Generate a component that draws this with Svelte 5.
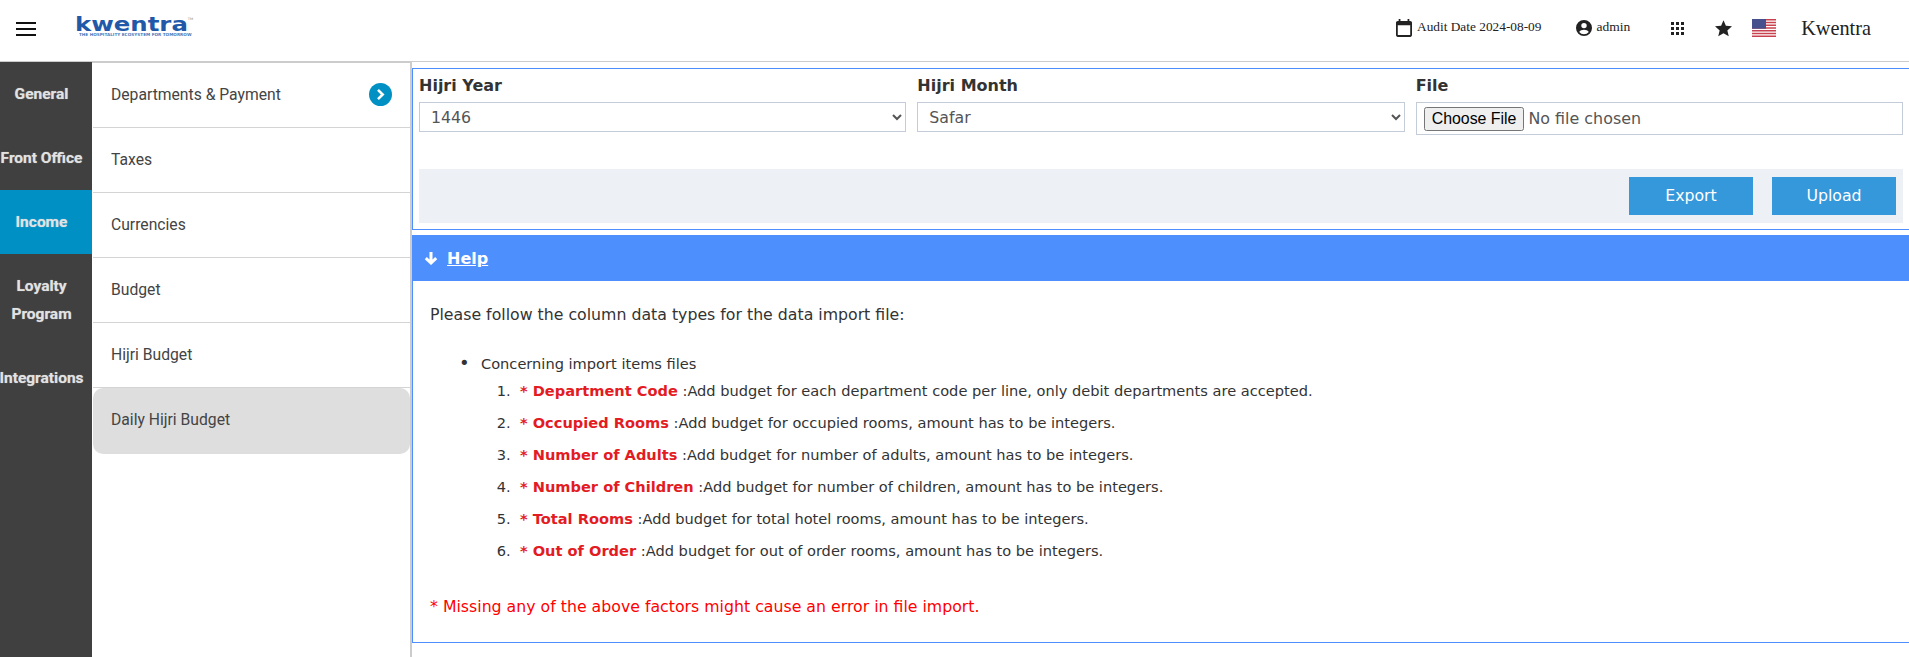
<script>
	const rail = [
		{ label: 'General', h: 63 },
		{ label: 'Front Office', h: 65 },
		{ label: 'Income', h: 64, active: true },
		{ label: 'Loyalty Program', h: 92 },
		{ label: 'Integrations', h: 64 }
	];

	const menu = ['Departments & Payment', 'Taxes', 'Currencies', 'Budget', 'Hijri Budget', 'Daily Hijri Budget'];

	const rules = [
		{ name: 'Department Code', text: 'Add budget for each department code per line, only debit departments are accepted.' },
		{ name: 'Occupied Rooms', text: 'Add budget for occupied rooms, amount has to be integers.' },
		{ name: 'Number of Adults', text: 'Add budget for number of adults, amount has to be integers.' },
		{ name: 'Number of Children', text: 'Add budget for number of children, amount has to be integers.' },
		{ name: 'Total Rooms', text: 'Add budget for total hotel rooms, amount has to be integers.' },
		{ name: 'Out of Order', text: 'Add budget for out of order rooms, amount has to be integers.' }
	];
</script>

<div class="page">
	<header class="topbar">
		<svg class="burger" width="20" height="14" viewBox="0 0 20 14"><path d="M0 0h20v2H0zM0 6h20v2H0zM0 12h20v2H0z" fill="#111" /></svg>
		<div class="logo">
			<span class="logo-word">kwentra<sup>TM</sup></span>
			<span class="logo-tag">THE HOSPITALITY ECOSYSTEM FOR TOMORROW</span>
		</div>
		<div class="top-right">
			<svg class="cal" width="16" height="18" viewBox="3 2 18 20"><path d="M19 4h-1V2h-2v2H8V2H6v2H5c-1.100 0-2 .9-2 2v14c0 1.100.9 2 2 2h14c1.100 0 2-.9 2-2V6c0-1.100-.9-2-2-2zm0 16H5V9h14v11z" fill="#222" /></svg>
			<span class="audit">Audit Date 2024-08-09</span>
			<svg class="user" width="16" height="16" viewBox="2 2 20 20"><path d="M12 2a10 10 0 1 0 0 20 10 10 0 0 0 0-20zm0 3.600a3.400 3.400 0 1 1 0 6.800 3.400 3.400 0 0 1 0-6.800zm0 14.200a7.800 7.800 0 0 1-6-2.800c.9-1.700 3.800-2.700 6-2.700s5.100 1 6 2.700a7.800 7.800 0 0 1-6 2.800z" fill="#222" /></svg>
			<span class="admin">admin</span>
			<svg class="apps" width="13" height="13" viewBox="0 0 13 13"><path d="M0 0h3v3H0zM5 0h3v3H5zM10 0h3v3h-3zM0 5h3v3H0zM5 5h3v3H5zM10 5h3v3h-3zM0 10h3v3H0zM5 10h3v3H5zM10 10h3v3h-3z" fill="#222" /></svg>
			<svg class="star" width="17" height="17" viewBox="2 2 20 19.500"><path d="M12 17.270 18.180 21l-1.640-7.030L22 9.240l-7.190-.61L12 2 9.190 8.630 2 9.240l5.460 4.730L5.820 21z" fill="#222" /></svg>
			<svg class="flag" width="24" height="18" viewBox="0 0 24 18">
				<rect width="24" height="18" fill="#fff" />
				<path d="M0 0h24v1.400H0zM0 2.800h24v1.400H0zM0 5.500h24v1.400H0zM0 8.300h24v1.400H0zM0 11.100h24v1.400H0zM0 13.800h24v1.400H0zM0 16.600h24V18H0z" fill="#c8414f" />
				<rect width="14" height="9.700" fill="#46508c" />
			</svg>
			<span class="brand">Kwentra</span>
		</div>
	</header>

	<div class="body">
		<nav class="rail">
			{#each rail as item}
				<div class="rail-item" class:active={item.active} style="height: {item.h}px">{item.label}</div>
			{/each}
		</nav>

		<aside class="menu">
			{#each menu as item, i}
				<div class="menu-item" class:current={i === 5}>
					<span>{item}</span>
					{#if i === 0}
						<svg width="23" height="23" viewBox="0 0 23 23"><circle cx="11.500" cy="11.500" r="11.500" fill="#0090c3" /><path d="M9 6.800l4.700 4.700L9 16.200" fill="none" stroke="#fff" stroke-width="2.600" /></svg>
					{/if}
				</div>
			{/each}
		</aside>

		<main class="content">
			<section class="filters">
				<div class="fields">
					<div class="field">
						<label for="year">Hijri Year</label>
						<select id="year"><option>1446</option></select>
					</div>
					<div class="field">
						<label for="month">Hijri Month</label>
						<select id="month"><option>Safar</option></select>
					</div>
					<div class="field">
						<label for="file">File</label>
						<div class="file-box"><input id="file" type="file" /></div>
					</div>
				</div>
				<div class="actions">
					<button>Export</button>
					<button>Upload</button>
				</div>
			</section>

			<section class="help">
				<div class="help-head">
					<svg width="14" height="13" viewBox="0 0 14 13"><path d="M7 0v11M1.800 6.200L7 11l5.200-4.800" fill="none" stroke="#fff" stroke-width="3" /></svg>
					<span>Help</span>
				</div>
				<div class="help-body">
					<p class="intro">Please follow the column data types for the data import file:</p>
					<ul>
						<li>
							Concerning import items files
							<ol>
								{#each rules as rule}
									<li><b>* {rule.name}</b> :{rule.text}</li>
								{/each}
							</ol>
						</li>
					</ul>
					<p class="warn">* Missing any of the above factors might cause an error in file import.</p>
				</div>
			</section>
		</main>
	</div>
</div>

<style>
	:global(body) {
		background: #fff;
		overflow: hidden;
	}

	.page {
		height: 657px;
		display: flex;
		flex-direction: column;
		font-family: 'DejaVu Sans', sans-serif;
		color: #333;
	}

	.topbar {
		height: 61px;
		border-bottom: 1px solid #ccc;
		display: flex;
		align-items: center;
	}

	.burger {
		margin-left: 16px;
		margin-top: -4px;
	}

	.logo {
		margin-left: 39px;
		margin-top: -8px;
		display: flex;
		flex-direction: column;
		width: 118px;
		color: #2159a8;
	}

	.logo-word {
		font-weight: 700;
		font-size: 20px;
		line-height: 16px;
		transform: scaleX(1.22);
		transform-origin: left center;
	}

	.logo-word sup {
		font-size: 3px;
		font-weight: 400;
		color: #888;
		vertical-align: 11px;
		line-height: 0;
	}

	.logo-tag {
		font-size: 4.200px;
		line-height: 5px;
		margin-left: 4px;
		font-weight: 700;
		white-space: nowrap;
		opacity: 0.8;
	}

	.top-right {
		margin-left: auto;
		display: flex;
		align-items: center;
		font-family: 'Liberation Serif', serif;
		color: #222;
		margin-top: -5px;
	}

	.audit {
		font-size: 13.330px;
		margin-left: 5px;
		margin-top: -3px;
	}

	.user {
		margin-left: 35px;
	}

	.admin {
		font-size: 13.500px;
		margin-left: 4px;
		margin-top: -3px;
	}

	.apps {
		margin-left: 41px;
	}

	.star {
		margin-left: 31px;
	}

	.flag {
		margin-left: 20px;
	}

	.brand {
		font-size: 20.300px;
		margin-left: 25px;
		margin-right: 38px;
	}

	.body {
		flex: 1;
		display: flex;
		min-height: 0;
	}

	.rail {
		width: 92px;
		flex: none;
		background: #404040;
		font-family: Roboto, sans-serif;
	}

	.rail-item {
		display: flex;
		align-items: center;
		justify-content: center;
		text-align: center;
		box-sizing: border-box;
		width: 92px;
		padding-right: 9px;
		color: #e2e2e2;
		font-size: 15.500px;
		font-weight: 700;
		line-height: 28px;
		text-shadow: 0 0 1px rgba(255, 255, 255, 0.5);
	}

	.rail-item.active {
		background: #0090c3;
	}

	.menu {
		width: 318px;
		flex: none;
		border-right: 2px solid #ccc;
		border-top: 1px solid #ccc;
		font-family: Roboto, sans-serif;
		font-size: 15.700px;
		color: #444;
	}

	.menu-item {
		height: 65px;
		box-sizing: border-box;
		border-bottom: 1px solid #d4d4d4;
		display: flex;
		align-items: center;
		justify-content: space-between;
		padding: 0 18px 2px 18px;
		margin-left: 1px;
	}

	.menu-item.current {
		height: 66px;
		background: #dedede;
		border-radius: 10px;
		border: none;
		padding-bottom: 4px;
	}

	.content {
		flex: 1;
		min-width: 0;
		padding-top: 6px;
	}

	.filters {
		height: 162px;
		box-sizing: border-box;
		border: 1px solid #4e8ffe;
		border-right: none;
		padding: 0 6px;
		display: flex;
		flex-direction: column;
	}

	.fields {
		display: grid;
		grid-template-columns: repeat(3, 1fr);
		column-gap: 11px;
		height: 100px;
	}

	.field {
		display: flex;
		flex-direction: column;
		align-items: stretch;
		min-width: 0;
	}

	label {
		font-weight: 700;
		font-size: 16px;
		line-height: 18px;
		margin-top: 8px;
		margin-bottom: 7px;
		color: #333;
	}

	select {
		height: 30px;
		box-sizing: border-box;
		border: 1px solid #c3ccd8;
		background: #fff;
		padding: 1px 0 0 7px;
		font-family: 'DejaVu Sans', sans-serif;
		font-size: 15.750px;
		color: #555;
		border-radius: 0;
	}

	.file-box {
		height: 33px;
		box-sizing: border-box;
		border: 1px solid #c3ccd8;
		padding: 4px 7px;
	}

	input[type='file'] {
		font-family: 'DejaVu Sans', sans-serif;
		font-size: 15.900px;
		color: #555;
	}

	.actions {
		height: 54px;
		background: #edf1f5;
		display: flex;
		justify-content: flex-end;
		align-items: center;
		gap: 19px;
		padding-right: 7px;
	}

	button {
		width: 124px;
		height: 38px;
		border: none;
		background: #3498db;
		color: #fff;
		font-family: 'DejaVu Sans', sans-serif;
		font-size: 15.750px;
		padding-bottom: 2px;
	}

	.help {
		margin-top: 5px;
		border-left: 1px solid #4e8ffe;
		border-bottom: 1px solid #4e8ffe;
	}

	.help-head {
		height: 46px;
		margin-left: -1px;
		background: #4e8ffe;
		color: #fff;
		display: flex;
		align-items: center;
		gap: 9px;
		padding-left: 12px;
		font-weight: 700;
		font-size: 16px;
	}

	.help-head span {
		text-decoration: underline;
	}

	.help-body {
		height: 361px;
		box-sizing: border-box;
		padding: 25px 17px 0;
		font-size: 15.750px;
		color: #333;
	}

	.intro {
		margin: 0 0 30px;
		line-height: 18px;
	}

	ul {
		margin: 0;
		padding-left: 51px;
		font-size: 14.600px;
		line-height: 17px;
	}

	ul > li::marker {
		content: '•\00a0\00a0';
		font-size: 18px;
	}

	ol {
		margin: 3px 0 0;
		padding-left: 39px;
	}

	ol li {
		height: 32px;
		line-height: 32px;
		white-space: nowrap;
	}

	ol li::marker {
		content: counter(list-item) '.\00a0\00a0';
		font-size: 14.600px;
	}

	ol b {
		color: #e31b23;
		font-weight: 700;
	}

	.warn {
		margin: 31px 0 0;
		color: #f00;
		line-height: 18px;
	}
</style>
